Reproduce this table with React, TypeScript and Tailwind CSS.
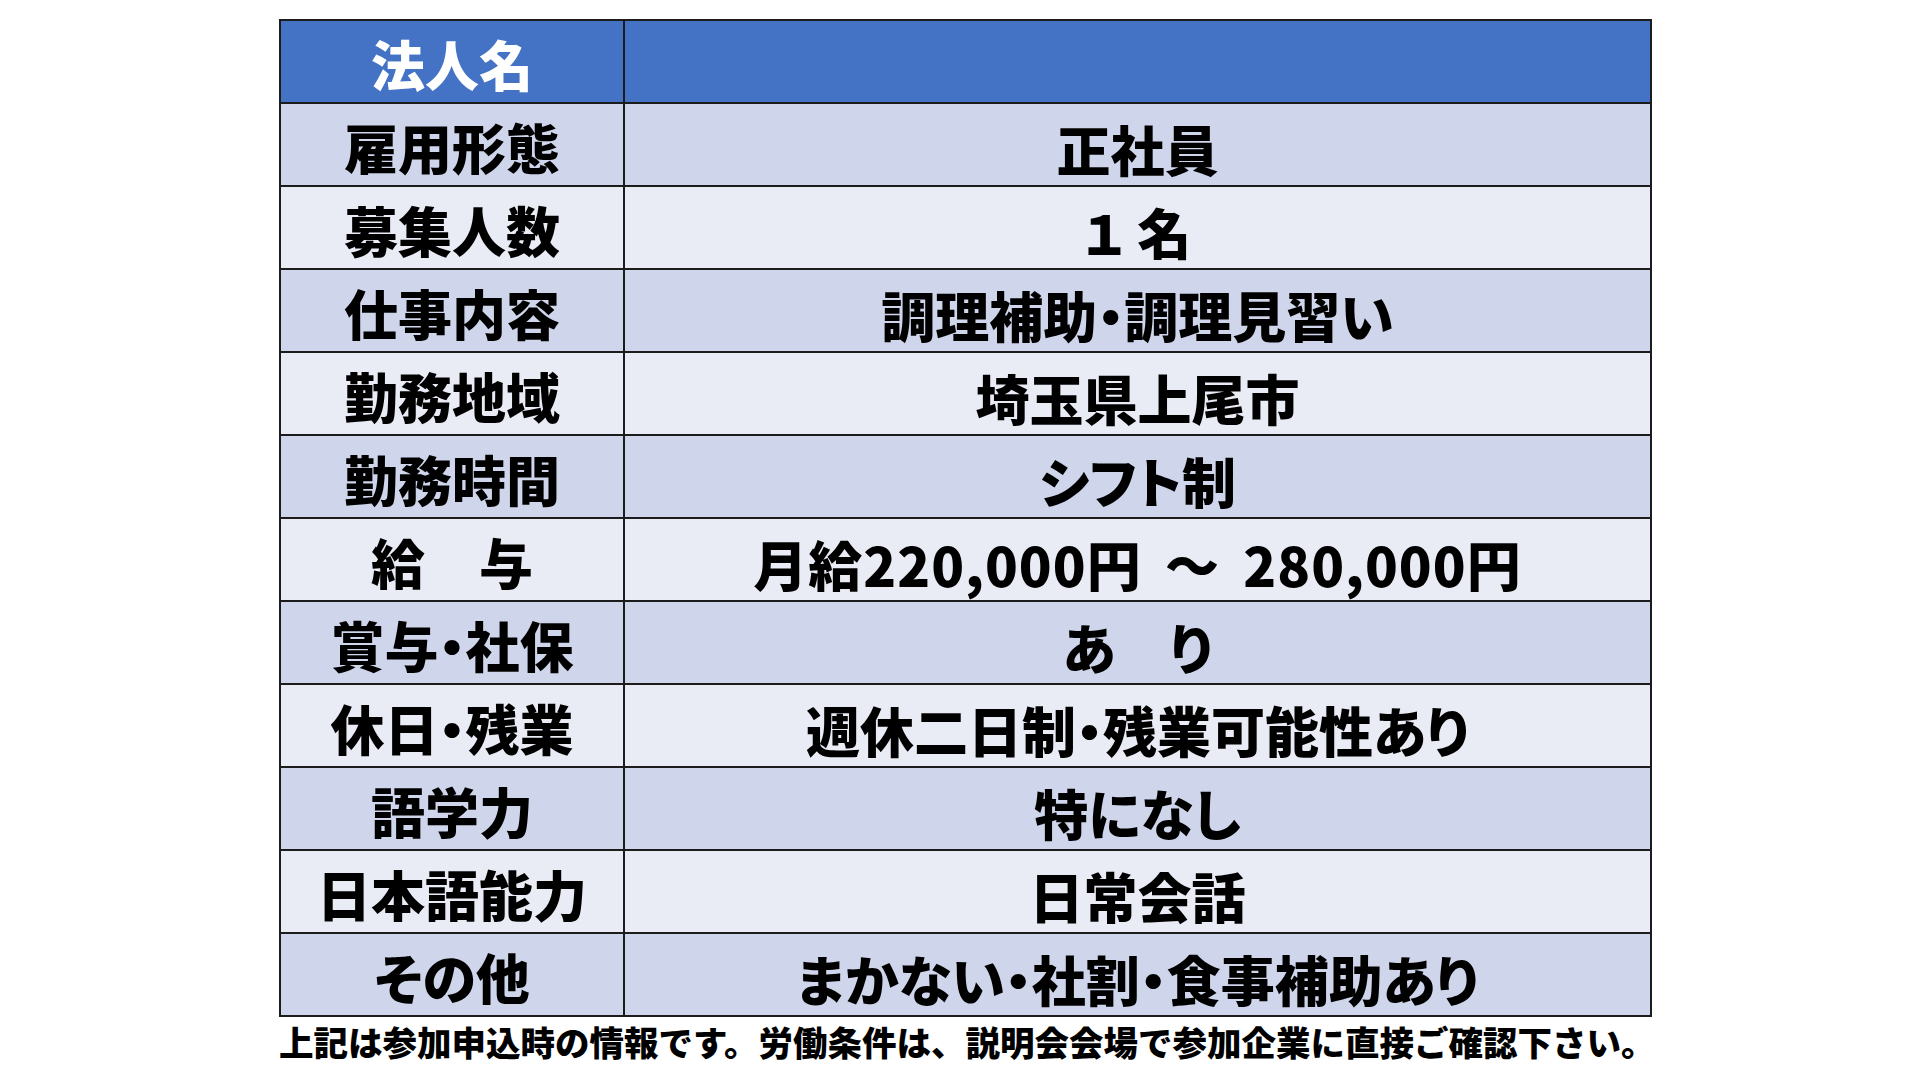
export default function App() {
  const rows: [string, string][] = [
    ["雇用形態", "正社員"],
    ["募集人数", "１ 名"],
    ["仕事内容", "調理補助・調理見習い"],
    ["勤務地域", "埼玉県上尾市"],
    ["勤務時間", "シフト制"],
    ["給　与", "月給220,000円 ～ 280,000円"],
    ["賞与・社保", "あ　り"],
    ["休日・残業", "週休二日制・残業可能性あり"],
    ["語学力", "特になし"],
    ["日本語能力", "日常会話"],
    ["その他", "まかない・社割・食事補助あり"],
  ]

  return (
    <div
      className="w-[1920px] h-[1080px] bg-white overflow-hidden pt-[19px] pl-[279px]"
      style={{ fontFamily: '"Noto Sans CJK JP", "Noto Sans", sans-serif' }}
    >
      <table className="w-[1373px] border-collapse border-2 border-[#1c1c1c] table-fixed [font-feature-settings:'palt']">
        <colgroup>
          <col className="w-[344px]" />
          <col />
        </colgroup>
        <tbody>
          <tr className="h-[83px] bg-[#4472c4]">
            <td className="border-2 border-[#1c1c1c] text-center text-white text-[54px] font-black leading-none pt-[4px]">
              法人名
            </td>
            <td className="border-2 border-[#1c1c1c]"></td>
          </tr>
          {rows.map(([label, value], i) => (
            <tr
              key={label}
              className={i % 2 === 0 ? "h-[83px] bg-[#cfd5ea]" : "h-[83px] bg-[#e9ebf5]"}
            >
              <td className="border-2 border-[#1c1c1c] text-center text-black text-[54px] font-black leading-none pt-[4px] whitespace-pre">
                {label}
              </td>
              <td
                className={
                  value.startsWith("月給")
                    ? "border-2 border-[#1c1c1c] text-center text-black text-[54px] font-black leading-none pt-[8px] whitespace-pre tracking-[1px] [word-spacing:10px]"
                    : "border-2 border-[#1c1c1c] text-center text-black text-[54px] font-black leading-none pt-[8px] whitespace-pre"
                }
              >
                {value}
              </td>
            </tr>
          ))}
        </tbody>
      </table>
      <p className="mt-[4px] text-[34.5px] font-black leading-[1.2] text-black whitespace-nowrap">
        上記は参加申込時の情報です。労働条件は、説明会会場で参加企業に直接ご確認下さい。
      </p>
    </div>
  )
}
